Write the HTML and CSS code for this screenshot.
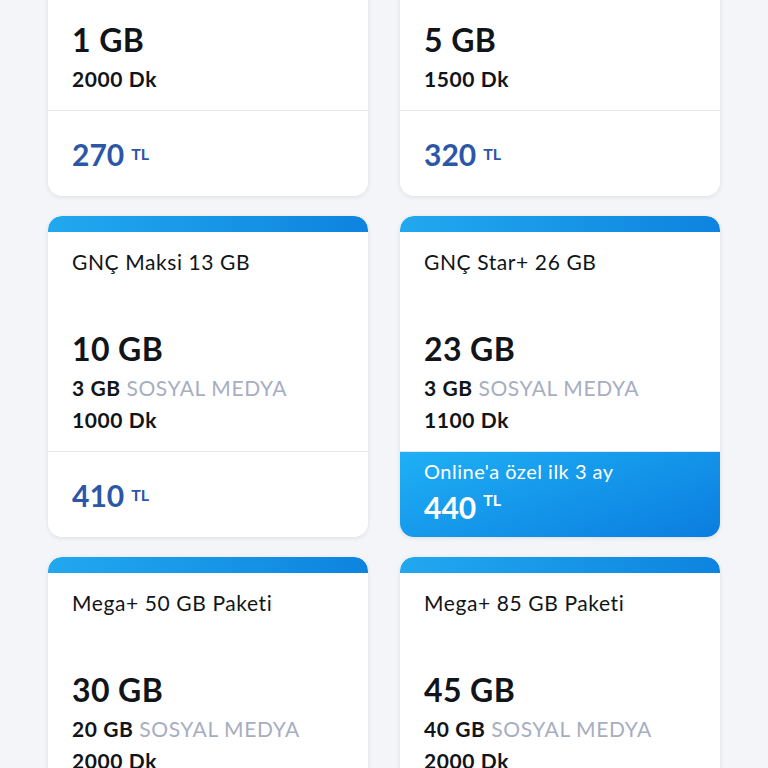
FILE: index.html
```html
<!DOCTYPE html>
<html lang="tr">
<head>
    <meta charset="UTF-8">
    <meta name="viewport" content="width=device-width, initial-scale=1.0">
    <title>Paketler</title>
    <link rel="stylesheet" href="styles.css">
</head>
<body>
    <div class="packages">
        <div class="card">
            <div class="band"></div>
            <div class="body">
                <div class="title">GNÇ Mini 1 GB</div>
                <div class="features">
                    <div class="data">1 GB</div>
                    <div class="line">2000 Dk</div>
                </div>
            </div>
            <div class="price"><span class="amount">270</span><span class="cur">TL</span></div>
        </div>

        <div class="card">
            <div class="band"></div>
            <div class="body">
                <div class="title">GNÇ Midi 5 GB</div>
                <div class="features">
                    <div class="data">5 GB</div>
                    <div class="line">1500 Dk</div>
                </div>
            </div>
            <div class="price"><span class="amount">320</span><span class="cur">TL</span></div>
        </div>

        <div class="card">
            <div class="band"></div>
            <div class="body">
                <div class="title">GNÇ Maksi 13 GB</div>
                <div class="features">
                    <div class="data">10 GB</div>
                    <div class="line">3 GB <span class="muted">SOSYAL MEDYA</span></div>
                    <div class="line">1000 Dk</div>
                </div>
            </div>
            <div class="price"><span class="amount">410</span><span class="cur">TL</span></div>
        </div>

        <div class="card">
            <div class="band"></div>
            <div class="body">
                <div class="title">GNÇ Star+ 26 GB</div>
                <div class="features">
                    <div class="data">23 GB</div>
                    <div class="line">3 GB <span class="muted">SOSYAL MEDYA</span></div>
                    <div class="line">1100 Dk</div>
                </div>
            </div>
            <div class="price special">
                <div class="note">Online'a özel ilk 3 ay</div>
                <div><span class="amount">440</span><span class="cur">TL</span></div>
            </div>
        </div>

        <div class="card">
            <div class="band"></div>
            <div class="body">
                <div class="title">Mega+ 50 GB Paketi</div>
                <div class="features">
                    <div class="data">30 GB</div>
                    <div class="line">20 GB <span class="muted">SOSYAL MEDYA</span></div>
                    <div class="line">2000 Dk</div>
                </div>
            </div>
            <div class="price"><span class="amount">490</span><span class="cur">TL</span></div>
        </div>

        <div class="card">
            <div class="band"></div>
            <div class="body">
                <div class="title">Mega+ 85 GB Paketi</div>
                <div class="features">
                    <div class="data">45 GB</div>
                    <div class="line">40 GB <span class="muted">SOSYAL MEDYA</span></div>
                    <div class="line">2000 Dk</div>
                </div>
            </div>
            <div class="price"><span class="amount">590</span><span class="cur">TL</span></div>
        </div>
    </div>
</body>
</html>
```

FILE: styles.css
```css
html, body {
    margin: 0;
    padding: 0;
}

body {
    background: #f3f5f8;
    font-family: Lato, "Noto Sans", sans-serif;
    color: #111418;
    overflow: hidden;
}

/* the list is scrolled, first row is cut at the top */
.packages {
    display: grid;
    grid-template-columns: 320px 320px;
    column-gap: 32px;
    row-gap: 20px;
    padding: 0 48px;
    margin-top: -125px;
}

.card {
    height: 321px;
    display: flex;
    flex-direction: column;
    background: #fff;
    border-radius: 14px;
    box-shadow: 0 1px 4px rgba(40, 60, 90, 0.12);
    overflow: hidden;
}

.band {
    height: 16px;
    flex: none;
    border-radius: 14px 14px 0 0;
    background: linear-gradient(90deg, #22a8ef, #0d84df);
}

.body {
    flex: 1;
    display: flex;
    flex-direction: column;
    padding: 18px 24px 15px;
    border-bottom: 1px solid #e3e6ea;
}

.title {
    font-size: 21px;
    line-height: 24px;
    letter-spacing: 0.6px;
}

.features {
    margin-top: auto;
}

.data {
    font-size: 32px;
    font-weight: 700;
    line-height: 38px;
    letter-spacing: 0.4px;
    margin-bottom: 4px;
}

.line {
    font-size: 21px;
    font-weight: 700;
    line-height: 32px;
    letter-spacing: 0.6px;
}

.muted {
    font-weight: 400;
    color: #a6aec0;
    letter-spacing: 0.6px;
}

.price {
    height: 85px;
    flex: none;
    display: flex;
    align-items: center;
    padding: 0 24px;
    color: #2b57a6;
}

.amount {
    font-size: 30px;
    font-weight: 700;
}

.cur {
    font-size: 16px;
    font-weight: 700;
    vertical-align: 13px;
    margin-left: 7px;
}

/* blue price box for online offers */
.special {
    flex-direction: column;
    align-items: flex-start;
    justify-content: center;
    color: #fff;
    background: linear-gradient(160deg, #1fb0f5, #0a7ddf);
}

.note {
    font-size: 20px;
    line-height: 24px;
    letter-spacing: 0.5px;
    margin-top: -6px;
    margin-bottom: 6px;
}
```
